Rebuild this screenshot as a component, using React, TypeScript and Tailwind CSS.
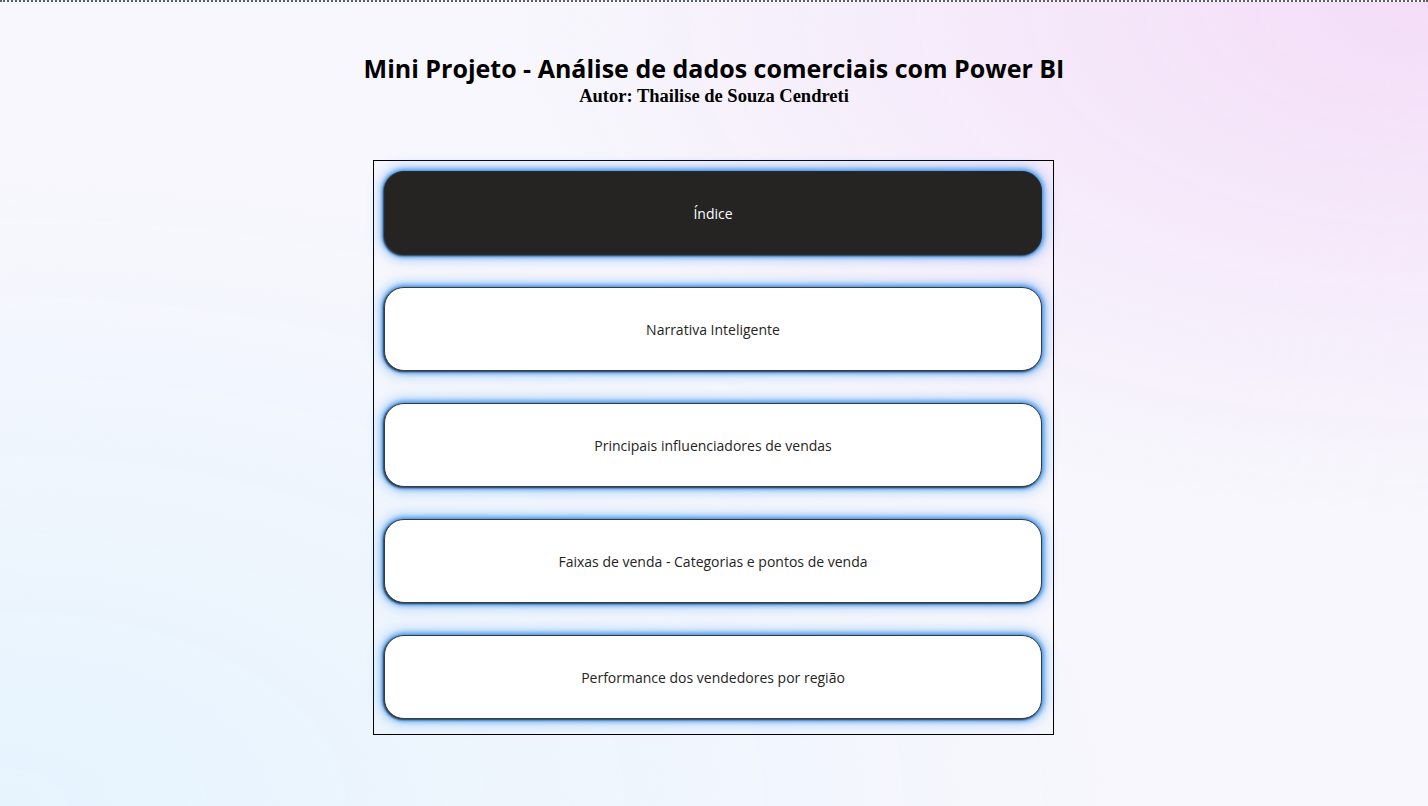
import React from 'react';

const pages = [
  'Índice',
  'Narrativa Inteligente',
  'Principais influenciadores de vendas',
  'Faixas de venda - Categorias e pontos de venda',
  'Performance dos vendedores por região',
];

export default function App() {
  return (
    <div
      className="relative h-[806px] w-full overflow-hidden border-t-2 border-dotted border-[#5f5f5f] bg-[#f7f7fd] bg-[radial-gradient(ellipse_at_100%_0%,#f4ddf8_0%,rgba(244,221,248,0)_45%),radial-gradient(ellipse_at_0%_100%,#e6f4fe_0%,rgba(230,244,254,0)_55%)]"
      style={{ fontFamily: '"Open Sans", "Noto Sans", sans-serif' }}
    >
      <div className="flex flex-col items-center pt-[49px]">
        <h1 className="text-[25px] font-bold leading-[34px] text-black">
          Mini Projeto - Análise de dados comerciais com Power BI
        </h1>
        <p
          className="text-[18.5px] font-bold leading-[22px] text-black"
          style={{ fontFamily: '"Liberation Serif", serif' }}
        >
          Autor: Thailise de Souza Cendreti
        </p>
      </div>

      <div className="mt-[53px] flex justify-center pr-px">
        <div className="flex w-[681px] flex-col gap-[32px] border border-black pb-[15px] pl-[10px] pr-[11px] pt-[10px]">
          {pages.map((label, i) => (
            <button
              key={label}
              type="button"
              className={`flex h-[84px] w-full items-center justify-center rounded-[20px] border text-[14px] shadow-[-1px_1px_2px_rgba(0,0,0,0.65),0_0_4px_2px_rgba(60,145,235,0.9),0_0_11px_5px_rgba(110,175,245,0.5)] ${
                i === 0
                  ? 'border-[#2a2a2a] bg-[#252423] text-white'
                  : 'border-[#3a3a3a] bg-white text-[#252423]'
              }`}
            >
              {label}
            </button>
          ))}
        </div>
      </div>
    </div>
  );
}
